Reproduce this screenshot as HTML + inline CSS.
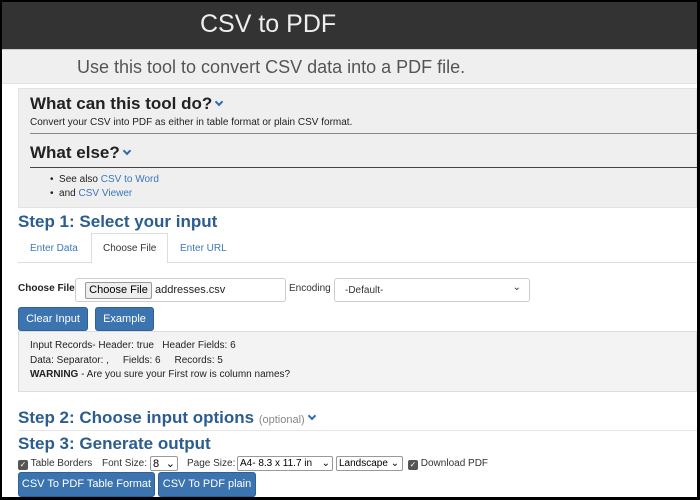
<!DOCTYPE html>
<html><head><style>
*{box-sizing:border-box;margin:0;padding:0}
body{width:700px;height:500px;background:#000;font-family:"Liberation Sans",Arial,sans-serif;position:relative;overflow:hidden}
#pg{position:absolute;left:2px;top:2px;width:695px;height:495px;background:#fff;overflow:hidden}
.a{position:absolute;white-space:nowrap}
.blue{color:#2b5d8e}
.lnk{color:#3a78b8}
.btn{position:absolute;background:#3c74b0;color:#fff;font-size:11px;border-radius:3px;text-align:center;border:1px solid #2f6097}
.sel{position:absolute;border:1px solid #999;background:#fff;font-size:11px;border-radius:2px;padding-left:2px;line-height:14px;white-space:nowrap;overflow:hidden}
.chev{display:inline-block;width:6px;height:6px;border-right:2px solid #2b6cb0;border-bottom:2px solid #2b6cb0;transform:rotate(45deg);margin-left:4px;position:relative;top:-4px}
.cb{display:inline-block;width:10px;height:10px;background:#555;border-radius:2px;vertical-align:-1px;color:#fff;font-size:8px;line-height:10px;text-align:center}
</style></head><body><div id="pg">
<div class="a" style="left:0;top:0;width:695px;height:47px;background:#333"></div>
<div class="a" style="left:198px;top:8px;font-size:25px;color:#eee">CSV to PDF</div>
<div class="a" style="left:0;top:47px;width:695px;height:35px;background:#efefef;border-top:1px solid #ccc;border-bottom:1px solid #e3e3e3"></div>
<div class="a" style="left:75px;top:55px;font-size:18px;color:#555">Use this tool to convert CSV data into a PDF file.</div>
<div class="a" style="left:16px;top:86px;width:679px;height:120px;background:#efefef;border:1px solid #e3e3e3"></div>
<div class="a" style="left:28px;top:92px;font-size:17px;font-weight:bold;color:#222">What can this tool do?<span class="chev"></span></div>
<div class="a" style="left:28px;top:115px;font-size:10px;color:#222">Convert your CSV into PDF as either in table format or plain CSV format.</div>
<div class="a" style="left:28px;top:131px;width:667px;height:1px;background:#888"></div>
<div class="a" style="left:28px;top:141px;font-size:17px;font-weight:bold;color:#222">What else?<span class="chev"></span></div>
<div class="a" style="left:28px;top:165px;width:667px;height:1px;background:#444"></div>
<div class="a" style="left:48px;top:171px;font-size:10px;color:#222;line-height:14px">•&nbsp; See also <span class="lnk">CSV to Word</span><br>•&nbsp; and <span class="lnk">CSV Viewer</span></div>
<div class="a blue" style="left:16px;top:210px;font-size:17px;font-weight:bold">Step 1: Select your input</div>
<div class="a" style="left:16px;top:260px;width:679px;height:1px;background:#ddd"></div>
<div class="a" style="left:89px;top:231px;width:77px;height:30px;background:#fff;border:1px solid #ddd;border-bottom:none"></div>
<div class="a lnk" style="left:28px;top:241px;font-size:10px">Enter Data</div>
<div class="a" style="left:101px;top:241px;font-size:10px;color:#333">Choose File</div>
<div class="a lnk" style="left:178px;top:241px;font-size:10px">Enter URL</div>
<div class="a" style="left:16px;top:281px;font-size:10px;font-weight:bold;color:#222">Choose File</div>
<div class="a" style="left:73px;top:276px;width:211px;height:24px;border:1px solid #ccc;border-radius:3px;background:#fff"></div>
<div class="a" style="left:83px;top:280px;width:67px;height:17px;border:1px solid #999;background:#eee;font-size:11px;text-align:center;line-height:15px;border-radius:2px">Choose File</div>
<div class="a" style="left:153px;top:282px;font-size:11px;color:#222">addresses.csv</div>
<div class="a" style="left:287px;top:281px;font-size:10px;color:#333">Encoding</div>
<div class="a" style="left:332px;top:276px;width:196px;height:24px;border:1px solid #ccc;border-radius:3px;background:#fff;font-size:10px;padding:6px 0 0 10px;color:#333">-Default-<span style="position:absolute;right:8px;top:3px;font-size:10px">⌄</span></div>
<div class="btn" style="left:16px;top:305px;width:70px;height:24px;line-height:22px">Clear Input</div>
<div class="btn" style="left:93px;top:305px;width:59px;height:24px;line-height:22px">Example</div>
<div class="a" style="left:16px;top:329px;width:679px;height:61px;background:#f3f3f3;border:1px solid #ddd"></div>
<div class="a" style="left:28px;top:337px;font-size:10px;color:#222;line-height:14.5px">Input Records- Header: true &nbsp; Header Fields: 6<br>Data: Separator: , &nbsp; &nbsp; Fields: 6 &nbsp; &nbsp; Records: 5<br><b>WARNING</b> - Are you sure your First row is column names?</div>
<div class="a blue" style="left:16px;top:406px;font-size:17px;font-weight:bold">Step 2: Choose input options <span style="font-size:11px;color:#888;font-weight:normal">(optional)</span><span class="chev"></span></div>
<div class="a" style="left:16px;top:428px;width:679px;height:1px;background:#e5e5e5"></div>
<div class="a blue" style="left:16px;top:432px;font-size:17px;font-weight:bold">Step 3: Generate output</div>
<div class="a" style="left:16px;top:456px;font-size:10px;color:#333"><span class="cb">✓</span> Table Borders</div>
<div class="a" style="left:100px;top:456px;font-size:10px;color:#333">Font Size:</div>
<div class="sel" style="left:148px;top:454px;width:28px;height:15px">8 <span style="float:right;margin-right:2px">⌄</span></div>
<div class="a" style="left:185px;top:456px;font-size:10px;color:#333">Page Size:</div>
<div class="sel" style="left:235px;top:454px;width:96px;height:15px;font-size:10px">A4- 8.3 x 11.7 in <span style="float:right;margin-right:2px">⌄</span></div>
<div class="sel" style="left:334px;top:454px;width:67px;height:15px;font-size:10px">Landscape ⌄</div>
<div class="a" style="left:406px;top:456px;font-size:10px;color:#333"><span class="cb">✓</span> Download PDF</div>
<div class="btn" style="left:16px;top:470px;width:137px;height:25px;line-height:23px">CSV To PDF Table Format</div>
<div class="btn" style="left:156px;top:470px;width:98px;height:25px;line-height:23px">CSV To PDF plain</div>
</div></body></html>
